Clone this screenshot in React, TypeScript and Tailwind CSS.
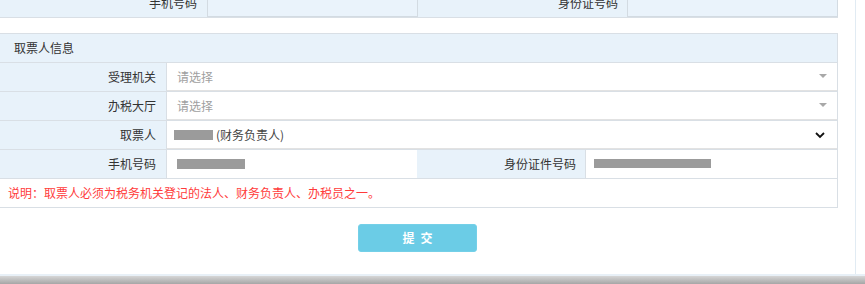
/**
 * TicketPickupForm — 取票人信息 section of the invoice pickup form.
 */

const LABEL = "text-right text-[12px] text-[#333] bg-[#e8f2fa]"

function Caret() {
  return (
    <svg width="8" height="5" viewBox="0 0 8 5" className="mr-[10px]">
      <polygon points="0,0 8,0 4,4" fill="#a8a8a8" />
    </svg>
  )
}

function Chevron() {
  return (
    <svg width="12" height="12" viewBox="0 0 12 12" className="mr-[11px]">
      <polyline points="2,4 6,8 10,4" fill="none" stroke="#111" strokeWidth="1.8" />
    </svg>
  )
}

function SelectRow({ label, children, icon }: { label: string; children: React.ReactNode; icon: React.ReactNode }) {
  return (
    <div className="flex h-[29px] border-b border-[#d9dfe5]">
      <div className={`${LABEL} w-[167px] border-r border-[#d9dfe5] pr-[10px] flex items-center justify-end`}>
        {label}
      </div>
      <div className="flex-1 flex items-center justify-between bg-white border-b border-[#e2e2e2] pl-[10px]">
        <div className="flex items-center text-[12px]">{children}</div>
        {icon}
      </div>
    </div>
  )
}

export default function App() {
  return (
    <div className="w-[865px] h-[284px] flex flex-col bg-white overflow-hidden font-['Noto_Sans_CJK_SC','Microsoft_YaHei',sans-serif]">
      <div className="flex flex-1 min-h-0">
        <div className="w-[838px]">
          {/* previous section, cut off at the top */}
          <div className="-mt-[11px] h-[29px] flex bg-[#e8f2fa] border-b border-[#d9dfe5]">
            <div className={`${LABEL} w-[207px] pr-[10px] flex items-center justify-end`}>手机号码</div>
            <div className="w-[211px] h-[28px] border border-[#d3dbe2] bg-[#eaf3fb]" />
            <div className={`${LABEL} w-[209px] pr-[9px] flex items-center justify-end`}>身份证号码</div>
            <div className="w-[211px] h-[28px] border border-[#d3dbe2] bg-[#eaf3fb]" />
          </div>

          <div className="mt-[15px] border-r border-[#d9dfe5]">
            <div className="h-[30px] border-t border-b border-[#d9dfe5] bg-[#e8f2fa] flex items-center pl-[14px] text-[12px] text-[#333]">
              取票人信息
            </div>

            <SelectRow label="受理机关" icon={<Caret />}>
              <span className="text-[#a0a0a0]">请选择</span>
            </SelectRow>
            <SelectRow label="办税大厅" icon={<Caret />}>
              <span className="text-[#a0a0a0]">请选择</span>
            </SelectRow>
            <SelectRow label="取票人" icon={<Chevron />}>
              <span className="ml-[-3px] w-[39px] h-[10px] bg-[#9b9b9b]" />
              <span className="ml-[3px] text-[#444]">(财务负责人)</span>
            </SelectRow>

            <div className="flex h-[29px] border-b border-[#d9dfe5]">
              <div className={`${LABEL} w-[167px] border-r border-[#d9dfe5] pr-[10px] flex items-center justify-end`}>
                手机号码
              </div>
              <div className="w-[250px] bg-white pl-[10px] pt-[9px]">
                <div className="w-[68px] h-[10px] bg-[#9b9b9b]" />
              </div>
              <div className={`${LABEL} w-[169px] border-r border-[#d9dfe5] pr-[9px] flex items-center justify-end`}>
                身份证件号码
              </div>
              <div className="flex-1 bg-white pl-[8px] pt-[9px]">
                <div className="w-[117px] h-[9px] bg-[#9b9b9b]" />
              </div>
            </div>

            <div className="h-[29px] border-b border-[#d9dfe5] flex items-center pl-[8px] text-[12px] text-[#ff3b3b]">
              说明：取票人必须为税务机关登记的法人、财务负责人、办税员之一。
            </div>
          </div>

          <button className="mt-[16px] ml-[358px] w-[119px] h-[28px] rounded-[3px] bg-[#6bcce6] border border-[#74d0e8] text-white text-[12px] font-bold tracking-[6px] pl-[6px]">
            提交
          </button>
        </div>
        <div className="ml-[17px] w-px bg-[#e1ebf3]" />
      </div>
      <div className="h-[2px] bg-[#e8f0f7]" />
      <div className="h-[8px] bg-gradient-to-b from-[#d6d6d6] to-[#a6a6a6]" />
    </div>
  )
}
